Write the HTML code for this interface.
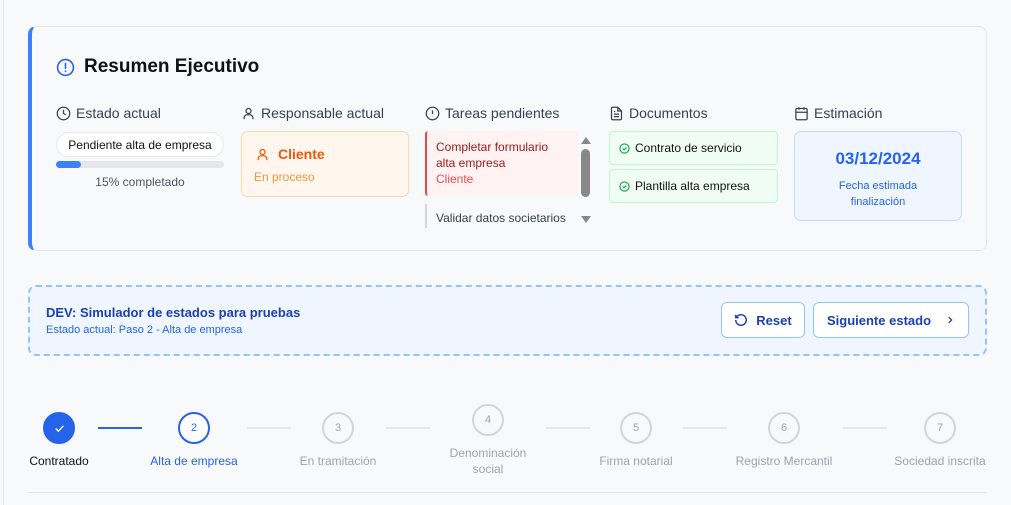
<!DOCTYPE html>
<html><head><meta charset="utf-8"><style>
*{box-sizing:border-box;margin:0;padding:0}
body{width:1011px;height:505px;background:#f8f9fb;font-family:"Liberation Sans",sans-serif;position:relative;overflow:hidden;color:#111827}
.edge{position:absolute;left:3px;top:0;width:1px;height:505px;background:#e5e7eb}
.card{position:absolute;left:28px;top:26px;width:959px;height:225px;border:1px solid #e5e7eb;border-left:4px solid #3b82f6;border-radius:8px;background:#f8f9fb}
.abs{position:absolute}
.h{font-size:14px;color:#374151;display:flex;align-items:center;gap:5px;position:absolute;top:105px}
svg{display:block}
.step{position:absolute;width:32px;height:32px;border-radius:50%;border:2px solid #d1d5db;color:#9ca3af;font-size:11px;display:flex;align-items:center;justify-content:center;background:#f8f9fb}
.lbl{position:absolute;font-size:12px;color:#9ca3af;text-align:center;width:140px;line-height:16px}
.ln{position:absolute;height:2px;background:#e5e7eb;top:427px}
</style></head><body>
<div class="edge"></div>
<div class="card"></div>
<div class="abs" style="left:56px;top:56px;display:flex;align-items:center;gap:9px">
<svg width="19" height="19" viewBox="0 0 24 24" fill="none" stroke="#2563eb" stroke-width="2"><circle cx="12" cy="12" r="10"/><path d="M12 7v6M12 16.5v.5" stroke-linecap="round"/></svg>
<span style="font-size:19px;font-weight:bold;color:#111">Resumen Ejecutivo</span></div>

<div class="h" style="left:56px"><svg width="15" height="15" viewBox="0 0 24 24" fill="none" stroke="#374151" stroke-width="2"><circle cx="12" cy="12" r="10"/><path d="M12 6v6l4 2"/></svg>Estado actual</div>
<div class="abs" style="left:56px;top:132px;width:168px;height:25px;border:1px solid #e5e7eb;border-radius:13px;background:#fff;font-size:12px;display:flex;align-items:center;justify-content:center;color:#111">Pendiente alta de empresa</div>
<div class="abs" style="left:56px;top:161px;width:168px;height:7px;border-radius:4px;background:#e5e7eb"><div style="width:25px;height:7px;border-radius:4px;background:#3b82f6"></div></div>
<div class="abs" style="left:56px;top:175px;width:168px;text-align:center;font-size:12px;color:#4b5563">15% completado</div>

<div class="h" style="left:241px"><svg width="15" height="15" viewBox="0 0 24 24" fill="none" stroke="#374151" stroke-width="2"><circle cx="12" cy="8" r="4"/><path d="M5 21v-2a5 5 0 0 1 5-5h4a5 5 0 0 1 5 5v2"/></svg>Responsable actual</div>
<div class="abs" style="left:241px;top:131px;width:168px;height:66px;border:1px solid #fed7aa;border-radius:7px;background:#fff7ed">
<div class="abs" style="left:13px;top:14px;display:flex;align-items:center;gap:8px;color:#ea580c;font-size:14px;font-weight:bold"><svg width="15" height="15" viewBox="0 0 24 24" fill="none" stroke="#ea580c" stroke-width="2"><circle cx="12" cy="8" r="4"/><path d="M5 21v-2a5 5 0 0 1 5-5h4a5 5 0 0 1 5 5v2"/></svg>Cliente</div>
<div class="abs" style="left:12px;top:38px;font-size:12px;color:#fb923c">En proceso</div></div>

<div class="h" style="left:425px"><svg width="15" height="15" viewBox="0 0 24 24" fill="none" stroke="#374151" stroke-width="2"><circle cx="12" cy="12" r="10"/><path d="M12 7v6M12 16.5v.5"/></svg>Tareas pendientes</div>
<div class="abs" style="left:425px;top:131px;width:153px;height:65px;background:#fef2f2;border-left:2px solid #ef4444;border-radius:3px;padding:8px 9px;font-size:12px;line-height:16px;color:#991b1b">Completar formulario alta empresa<div style="color:#dc2626;opacity:.8">Cliente</div></div>
<div class="abs" style="left:425px;top:204px;width:153px;height:24px;border-left:2px solid #d1d5db;padding:7px 9px;font-size:12px;color:#374151;background:#f8f9fb">Validar datos societarios</div>
<div class="abs" style="left:581px;top:137px;width:0;height:0;border-left:5px solid transparent;border-right:5px solid transparent;border-bottom:7px solid #888"></div>
<div class="abs" style="left:581px;top:149px;width:9px;height:48px;border-radius:5px;background:#888"></div>
<div class="abs" style="left:581px;top:216px;width:0;height:0;border-left:5px solid transparent;border-right:5px solid transparent;border-top:7px solid #888"></div>

<div class="h" style="left:609px"><svg width="15" height="15" viewBox="0 0 24 24" fill="none" stroke="#374151" stroke-width="2"><path d="M14 2H6a2 2 0 0 0-2 2v16a2 2 0 0 0 2 2h12a2 2 0 0 0 2-2V8z"/><path d="M14 2v6h6M8 13h8M8 17h8M8 9h2"/></svg>Documentos</div>
<div class="abs" style="left:609px;top:131px;width:169px;height:34px;border:1px solid #bbf7d0;border-radius:4px;background:#f0fdf4;display:flex;align-items:center;gap:5px;padding-left:9px;font-size:12px;color:#111"><svg width="11" height="11" viewBox="0 0 24 24" fill="none" stroke="#16a34a" stroke-width="2.5"><circle cx="12" cy="12" r="10"/><path d="M8 12l3 3 5-5"/></svg>Contrato de servicio</div>
<div class="abs" style="left:609px;top:169px;width:169px;height:34px;border:1px solid #bbf7d0;border-radius:4px;background:#f0fdf4;display:flex;align-items:center;gap:5px;padding-left:9px;font-size:12px;color:#111"><svg width="11" height="11" viewBox="0 0 24 24" fill="none" stroke="#16a34a" stroke-width="2.5"><circle cx="12" cy="12" r="10"/><path d="M8 12l3 3 5-5"/></svg>Plantilla alta empresa</div>

<div class="h" style="left:794px"><svg width="15" height="15" viewBox="0 0 24 24" fill="none" stroke="#374151" stroke-width="2"><rect x="3" y="4" width="18" height="18" rx="2"/><path d="M16 2v4M8 2v4M3 10h18"/></svg>Estimación</div>
<div class="abs" style="left:794px;top:131px;width:168px;height:90px;border:1px solid #bfdbfe;border-radius:7px;background:#eff6ff;text-align:center">
<div style="margin-top:17px;font-size:17px;font-weight:bold;color:#2563eb">03/12/2024</div>
<div style="margin-top:9px;font-size:11px;line-height:16px;color:#2563eb">Fecha estimada<br>finalización</div></div>

<div class="abs" style="left:28px;top:285px;width:959px;height:71px;border:2px dashed #93c5fd;border-radius:8px;background:#eff6ff">
<div class="abs" style="left:16px;top:18px;font-size:13px;font-weight:bold;color:#1e40af">DEV: Simulador de estados para pruebas</div>
<div class="abs" style="left:16px;top:37px;font-size:11px;color:#2563eb">Estado actual: Paso 2 - Alta de empresa</div>
<div class="abs" style="left:691px;top:15px;width:84px;height:36px;border:1px solid #93c5fd;border-radius:6px;background:#fff;display:flex;align-items:center;justify-content:center;gap:8px;font-size:13px;font-weight:bold;color:#1e40af"><svg width="14" height="14" viewBox="0 0 24 24" fill="none" stroke="#1e40af" stroke-width="2.5"><path d="M3 12a9 9 0 1 0 3-6.7L3 8"/><path d="M3 3v5h5"/></svg>Reset</div>
<div class="abs" style="left:783px;top:15px;width:156px;height:36px;border:1px solid #93c5fd;border-radius:6px;background:#fff;display:flex;align-items:center;justify-content:center;gap:14px;font-size:13px;font-weight:bold;color:#1e40af">Siguiente estado<svg width="10" height="10" viewBox="0 0 24 24" fill="none" stroke="#1e40af" stroke-width="3"><path d="M9 5l7 7-7 7"/></svg></div>
</div>

<div class="ln" style="left:98px;width:44px;background:#2563eb"></div>
<div class="ln" style="left:247px;width:44px"></div>
<div class="ln" style="left:386px;width:44px"></div>
<div class="ln" style="left:546px;width:44px"></div>
<div class="ln" style="left:683px;width:44px"></div>
<div class="ln" style="left:843px;width:44px"></div>
<div class="step" style="left:43px;top:412px;background:#2563eb;border-color:#2563eb"><svg width="13" height="13" viewBox="0 0 24 24" fill="none" stroke="#fff" stroke-width="2.5"><path d="M5 12l5 5 9-10"/></svg></div>
<div class="step" style="left:178px;top:412px;border-color:#2563eb;color:#2563eb;background:#fff">2</div>
<div class="step" style="left:322px;top:412px">3</div>
<div class="step" style="left:472px;top:404px">4</div>
<div class="step" style="left:620px;top:412px">5</div>
<div class="step" style="left:768px;top:412px">6</div>
<div class="step" style="left:924px;top:412px">7</div>
<div class="lbl" style="left:-11px;top:453px;color:#111">Contratado</div>
<div class="lbl" style="left:124px;top:453px;color:#2563eb">Alta de empresa</div>
<div class="lbl" style="left:268px;top:453px">En tramitación</div>
<div class="lbl" style="left:418px;top:445px">Denominación<br>social</div>
<div class="lbl" style="left:566px;top:453px">Firma notarial</div>
<div class="lbl" style="left:714px;top:453px">Registro Mercantil</div>
<div class="lbl" style="left:870px;top:453px">Sociedad inscrita</div>
<div class="abs" style="left:28px;top:492px;width:959px;height:1px;background:#e5e7eb"></div>
</body></html>
